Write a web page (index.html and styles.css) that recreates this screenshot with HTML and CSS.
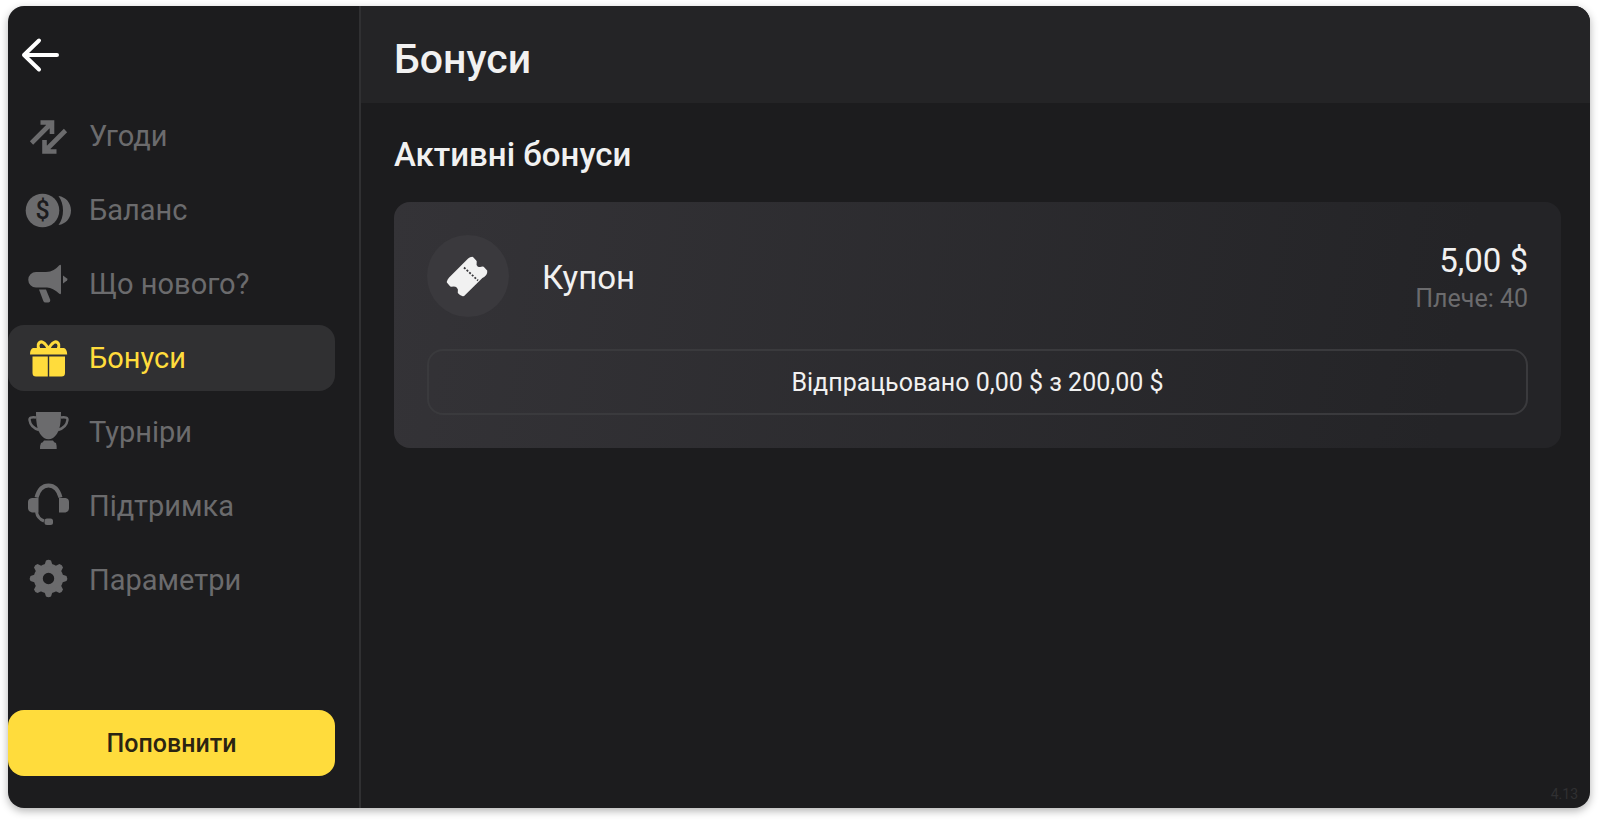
FILE: index.html
```html
<!DOCTYPE html>
<html lang="uk">

<head>
    <meta charset="UTF-8">
    <meta name="viewport" content="width=device-width, initial-scale=1.0">
    <title>Бонуси</title>
    <link rel="stylesheet" href="styles.css">
</head>

<body>
    <div class="app">
        <aside class="sidebar">
            <a href="#" class="back" aria-label="Назад">
                <svg width="40" height="40" viewBox="0 0 40 40" fill="none" stroke="currentColor" stroke-width="4" stroke-linecap="round" stroke-linejoin="round">
                    <path d="M36 20H3M18 5.500L3 20L18 34.500" />
                </svg>
            </a>

            <nav class="menu">
                <a href="#" class="menu-item">
                    <svg class="icon" viewBox="0 0 48 48" fill="none" stroke="currentColor" stroke-width="4.600">
                        <path d="M7.500 31L27 11.500M16.500 10.500H28V22M41.500 18.500L22 38M20.500 28V39.500H32.500" />
                        <path d="M20 10.500H28V18.500ZM20.500 31.500V39.500H28.500Z" fill="currentColor" stroke="none" />
                    </svg>
                    <span>Угоди</span>
                </a>
                <a href="#" class="menu-item">
                    <svg class="icon" viewBox="0 0 48 48" fill="currentColor">
                        <circle cx="18.500" cy="24.500" r="16.800" />
                        <path d="M34.500 10C42 11 47 17 47 24.500S42 38 34.500 39C37.500 35 39 30 39 24.500S37.500 14 34.500 10Z" />
                        <text x="18.500" y="33" class="coin-sign">$</text>
                    </svg>
                    <span>Баланс</span>
                </a>
                <a href="#" class="menu-item">
                    <svg class="icon" viewBox="0 0 48 48" fill="currentColor">
                        <path d="M12 12H22C28 12 32 9 35 5.500Q37 4 37 6V33Q37 35 35 33.500C31 30 27 27.500 23 27.500H12A7.750 7.750 0 0 1 12 12Z" />
                        <path d="M39 15.500L43 18.500Q44 19.500 43 20.500L39 23.500Z" />
                        <path d="M15 29.500H22L26.300 40Q26.500 42 24.500 42.500H21.500Q20 42.500 19.300 41Z" />
                    </svg>
                    <span>Що нового?</span>
                </a>
                <a href="#" class="menu-item active" aria-current="page">
                    <svg class="icon" viewBox="0 0 48 48" fill="currentColor">
                        <path d="M24.500 15C21 8 17 6.500 15 9S14.500 15 16 15M24.500 15C28 8 32 6.500 34 9S34.500 15 33 15" fill="none" stroke="currentColor" stroke-width="3" />
                        <path d="M9 14H40Q43 15 43.200 20.500H6Q6 15 9 14Z" />
                        <path d="M8.500 22.500H23.800V42.500H12Q8.500 42.500 8.500 39ZM25.200 22.500H41V39Q41 42.500 37.500 42.500H25.200Z" />
                    </svg>
                    <span>Бонуси</span>
                </a>
                <a href="#" class="menu-item">
                    <svg class="icon" viewBox="0 0 48 48" fill="currentColor">
                        <path d="M12 4H37C37 17 35.500 25 29 30Q24.500 32.500 20 30C13.500 25 12 17 12 4Z" />
                        <path d="M12 9.500Q5 8.500 5.500 12Q6.500 19.500 15 22M37 9.500Q44 8.500 43.500 12Q42.500 19.500 34 22" fill="none" stroke="currentColor" stroke-width="2.400" />
                        <path d="M20 32.500H29Q30 34.500 32 35Q32.700 37 32.700 41H16Q16 37 17 35Q19 34.500 20 32.500Z" />
                    </svg>
                    <span>Турніри</span>
                </a>
                <a href="#" class="menu-item">
                    <svg class="icon" viewBox="0 0 48 48" fill="currentColor">
                        <path d="M12.500 15.500C14.500 8 19 3.500 24.500 3.500S34.500 8 36.500 15.500" fill="none" stroke="currentColor" stroke-width="4" />
                        <path d="M8 16H14.500V30.500H8Q4 29.500 4 26V20Q4 16.500 8 16ZM35 16H41.500Q45 16.500 45 20V26Q45 29.500 41.500 30.500H35Z" />
                        <path d="M12.500 30Q13.500 36.500 20 39" fill="none" stroke="currentColor" stroke-width="3" />
                        <rect x="20.500" y="36.500" width="8.500" height="6.500" rx="2.500" />
                    </svg>
                    <span>Підтримка</span>
                </a>
                <a href="#" class="menu-item">
                    <svg class="icon" viewBox="0 0 48 48" fill="currentColor">
                        <circle cx="24.500" cy="22.500" r="10.200" fill="none" stroke="currentColor" stroke-width="9" />
                        <path id="tooth" d="M20 10.500L22 4.500Q24.500 3 27 4.500L29 10.500Z" />
                        <use href="#tooth" transform="rotate(45 24.500 22.500)" />
                        <use href="#tooth" transform="rotate(90 24.500 22.500)" />
                        <use href="#tooth" transform="rotate(135 24.500 22.500)" />
                        <use href="#tooth" transform="rotate(180 24.500 22.500)" />
                        <use href="#tooth" transform="rotate(225 24.500 22.500)" />
                        <use href="#tooth" transform="rotate(270 24.500 22.500)" />
                        <use href="#tooth" transform="rotate(315 24.500 22.500)" />
                    </svg>
                    <span>Параметри</span>
                </a>
            </nav>

            <button type="button" class="deposit">Поповнити</button>
        </aside>

        <main class="content">
            <header class="header">
                <h1>Бонуси</h1>
            </header>

            <section class="bonuses">
                <h2>Активні бонуси</h2>

                <div class="bonus-card">
                    <div class="bonus-top">
                        <div class="bonus-icon">
                            <svg width="82" height="82" viewBox="0 0 82 82">
                                <path d="M45.300 23L48.500 26.500Q47.500 30.500 50 32.500Q52.500 34 56 32.800L59 36Q59.500 40 54.500 42L36.500 59.800Q34.500 60.500 32 57.500Q33 53.500 30.500 51.500Q28.500 49.500 24 50.500L21 47Q21.500 45 23 43.500L42 24.500Q43.500 23 45.300 23Z" fill="#f1f1f1" stroke="#f1f1f1" stroke-width="2.500" stroke-linejoin="round" />
                                <path d="M37 32.500L51 45.500" stroke="#38373b" stroke-width="1.800" stroke-dasharray="2 1.600" />
                            </svg>
                        </div>
                        <h3>Купон</h3>
                        <div class="bonus-sum">
                            <div class="amount">5,00 $</div>
                            <div class="leverage">Плече: 40</div>
                        </div>
                    </div>
                    <div class="progress">Відпрацьовано 0,00 $ з 200,00 $</div>
                </div>
            </section>

            <footer class="version">4.13</footer>
        </main>
    </div>
</body>

</html>
```
FILE: styles.css
```css
* {
    box-sizing: border-box;
}

body {
    margin: 0;
    padding: 6px 10px 13px 8px;
    font-family: Roboto, 'Liberation Sans', sans-serif;
    background-color: #fff;
    color: #f1f1f1;
}

h1,
h2,
h3 {
    margin: 0;
    font-weight: 500;
}

.app {
    display: flex;
    min-height: calc(100vh - 19px);
    background-color: #1c1c1e;
    border-radius: 16px;
    overflow: hidden;
    box-shadow: 0 3px 8px rgba(0, 0, 0, 0.3);
}

.sidebar {
    display: flex;
    flex-direction: column;
    flex: none;
    width: 353px;
    padding-bottom: 32px;
    border-right: 2px solid #303032;
}

.back {
    display: flex;
    align-items: center;
    height: 97px;
    padding-left: 13px;
    color: #fff;
}

.menu {
    display: flex;
    flex-direction: column;
    gap: 8px;
    margin-right: 24px;
}

.menu-item {
    display: flex;
    align-items: center;
    gap: 17px;
    height: 66px;
    padding-left: 16px;
    border-radius: 16px;
    font-size: 29px;
    color: #6b6b6d;
    text-decoration: none;
}

.menu-item.active {
    background-color: #303032;
    color: #ffdc3c;
}

.icon {
    flex: none;
    width: 48px;
    height: 48px;
}

.coin-sign {
    font-size: 25px;
    font-weight: 500;
    text-anchor: middle;
    fill: #1c1c1e;
}

.deposit {
    height: 66px;
    margin-top: auto;
    margin-right: 24px;
    border: none;
    border-radius: 16px;
    background-color: #ffdc3c;
    color: #2b2412;
    font-family: inherit;
    font-size: 25px;
    font-weight: 500;
    cursor: pointer;
}

.content {
    display: flex;
    flex-direction: column;
    flex: 1;
}

.header {
    display: flex;
    align-items: center;
    height: 97px;
    padding: 8px 33px 0;
    background-color: #242426;
}

.header h1 {
    font-size: 41px;
}

.bonuses {
    padding: 32px 29px 32px 33px;
}

.bonuses h2 {
    margin-bottom: 27px;
    font-size: 33px;
    line-height: 40px;
}

.bonus-card {
    padding: 33px;
    border-radius: 16px;
    background: linear-gradient(100deg, #343337, #242427 90%);
}

.bonus-top {
    display: flex;
    align-items: center;
    gap: 33px;
    margin-bottom: 32px;
}

.bonus-icon {
    width: 82px;
    height: 82px;
    border-radius: 50%;
    background-color: #3a393d;
}

.bonus-top h3 {
    padding-top: 3px;
    font-size: 33px;
    font-weight: 400;
}

.bonus-sum {
    align-self: flex-end;
    margin-left: auto;
    text-align: right;
}

.amount {
    font-size: 33px;
    line-height: 40px;
}

.leverage {
    font-size: 25px;
    line-height: 36px;
    color: #6b6b6d;
}

.progress {
    display: flex;
    align-items: center;
    justify-content: center;
    height: 66px;
    border: 2px solid #3a3a3d;
    border-radius: 16px;
    font-size: 25px;
}

.version {
    margin-top: auto;
    padding: 0 12px 6px;
    font-size: 14px;
    text-align: right;
    color: #303032;
}
```
